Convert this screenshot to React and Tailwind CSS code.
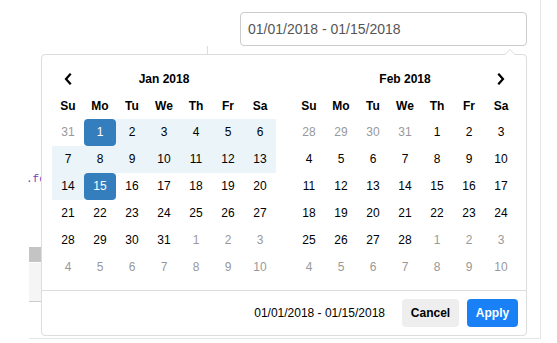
import React from 'react';

const janRows = [
  [[31, 'off'], [1, 'start'], [2, 'in'], [3, 'in'], [4, 'in'], [5, 'in'], [6, 'in']],
  [[7, 'in'], [8, 'in'], [9, 'in'], [10, 'in'], [11, 'in'], [12, 'in'], [13, 'in']],
  [[14, 'in'], [15, 'end'], [16], [17], [18], [19], [20]],
  [[21], [22], [23], [24], [25], [26], [27]],
  [[28], [29], [30], [31], [1, 'off'], [2, 'off'], [3, 'off']],
  [[4, 'off'], [5, 'off'], [6, 'off'], [7, 'off'], [8, 'off'], [9, 'off'], [10, 'off']],
];

const febRows = [
  [[28, 'off'], [29, 'off'], [30, 'off'], [31, 'off'], [1], [2], [3]],
  [[4], [5], [6], [7], [8], [9], [10]],
  [[11], [12], [13], [14], [15], [16], [17]],
  [[18], [19], [20], [21], [22], [23], [24]],
  [[25], [26], [27], [28], [1, 'off'], [2, 'off'], [3, 'off']],
  [[4, 'off'], [5, 'off'], [6, 'off'], [7, 'off'], [8, 'off'], [9, 'off'], [10, 'off']],
];

const dayNames = ['Su', 'Mo', 'Tu', 'We', 'Th', 'Fr', 'Sa'];

const cellClass = (state) => {
  if (state === 'start' || state === 'end') return 'bg-[#357ebd] text-white rounded-[4px]';
  if (state === 'in') return 'bg-[#ebf4f8] text-black';
  if (state === 'off') return 'text-[#999]';
  return 'text-black';
};

const Chevron = ({ dir }) => (
  <svg width="8" height="12" viewBox="0 0 8 12">
    <path
      d={dir === 'left' ? 'M6 1.5 L2 6 L6 10.5' : 'M2 1.5 L6 6 L2 10.5'}
      fill="none"
      stroke="#000"
      strokeWidth="2.2"
      strokeLinecap="square"
    />
  </svg>
);

const Calendar = ({ title, rows, prev, next }) => (
  <div className="w-[224px]">
    <div className="grid grid-cols-7 h-[27px] items-center font-bold">
      <div className="flex justify-center">{prev && <Chevron dir="left" />}</div>
      <div className="col-span-5 text-center">{title}</div>
      <div className="flex justify-center">{next && <Chevron dir="right" />}</div>
    </div>
    <div className="grid grid-cols-7 h-[27px] items-center font-bold text-center">
      {dayNames.map((d) => (
        <div key={d}>{d}</div>
      ))}
    </div>
    {rows.map((row, i) => (
      <div key={i} className="grid grid-cols-7">
        {row.map(([n, state], j) => (
          <div key={j} className={`h-[27px] leading-[27px] text-center ${cellClass(state)}`}>
            {n}
          </div>
        ))}
      </div>
    ))}
  </div>
);

export default function App() {
  return (
    <div className="relative w-[557px] h-[343px] bg-white overflow-hidden font-['Liberation_Sans',Arial,sans-serif] text-[12px]">
      {/* page behind the picker */}
      <div className="flex flex-col">
        <div className="flex h-[46px]">
          <div className="w-[240px]" />
          <div className="mt-[12px] w-[287px] h-[34px] border border-[#ccc] rounded-[4px] flex items-center pl-[7px] text-[14px] text-[#555]">
            01/01/2018 - 01/15/2018
          </div>
          <div className="ml-[13px] border-r border-[#e5e5e5]" />
        </div>
        <div className="flex">
          <div className="ml-[29px] w-[512px] h-[293px] border-r border-b border-[#e5e5e5] flex flex-col">
            <div className="ml-[178px] w-px h-[8px] bg-[#ddd]" />
            <div className="mt-[117px] -ml-[3px] h-[14px] font-['Liberation_Mono',monospace] text-[11px] text-[#6f42c1]">.fo</div>
            <div className="mt-[62px] h-[15px] w-[40px] bg-[#c4c4c4]" />
            <div className="mt-[1px] h-[39px] w-[40px] bg-[#f5f5f5] border-b border-[#ccc]" />
          </div>
        </div>
      </div>

      {/* date range picker dropdown */}
      <div className="absolute left-[41px] top-[54px] w-[486px] bg-white border border-[#ddd] rounded-[4px] z-10">
        <div className="absolute -top-[6px] right-[10px] w-0 h-0 border-x-[6px] border-x-transparent border-b-[6px] border-b-[#ddd]" />
        <div className="absolute -top-[5px] right-[11px] w-0 h-0 border-x-[5px] border-x-transparent border-b-[5px] border-b-white" />
        <div className="flex pl-[10px] pr-[9px] pt-[10px] pb-[9px] gap-[17px]">
          <Calendar title="Jan 2018" rows={janRows} prev />
          <Calendar title="Feb 2018" rows={febRows} next />
        </div>
        <div className="border-t border-[#ddd] flex items-center justify-end gap-[8px] px-[8px] py-[8px]">
          <span className="mr-[9px] text-black">01/01/2018 - 01/15/2018</span>
          <button className="h-[28px] w-[57px] rounded-[4px] bg-[#eee] text-black font-bold">Cancel</button>
          <button className="h-[28px] w-[51px] rounded-[4px] bg-[#1a80f6] text-white font-bold">Apply</button>
        </div>
      </div>
    </div>
  );
}
